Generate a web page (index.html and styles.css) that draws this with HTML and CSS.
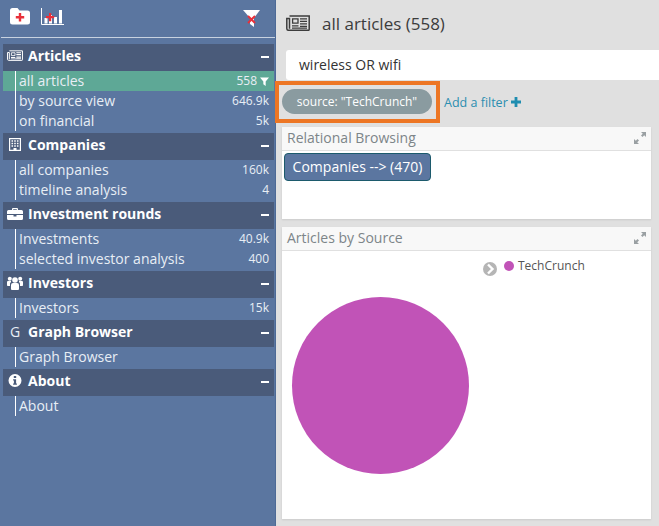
FILE: index.html
```html
<!DOCTYPE html>
<html lang="en">
<head>
  <meta charset="UTF-8">
  <title>all articles (558)</title>
  <link rel="stylesheet" href="styles.css">
</head>
<body>
  <svg class="defs" width="0" height="0">
    <symbol id="news" viewBox="0 0 24 16">
      <path fill="none" stroke="currentColor" stroke-width="1.500" d="M3.500 1h19.700v13.400a.9.9 0 0 1-.9.9H2.400A1.700 1.700 0 0 1 .8 13.600V3.500h2.700v10.200"/>
      <path fill="none" stroke="currentColor" stroke-width="1.300" d="M6.600 3.900h5.400v4.300H6.600z"/>
      <path fill="currentColor" d="M14 3.300h7v1.300h-7zM14 5.800h7v1.300h-7zM14 8.300h7v1.300h-7zM6 10.300h6.500v1.300H6zM14 10.800h7v1.300h-7zM6 12.600h15v1.200H6z"/>
    </symbol>
  </svg>
  <aside class="sidebar">
    <div class="toolbar">
      <svg width="20" height="17" viewBox="0 0 20 17">
        <path fill="#fff" d="M2.500 0h5l2 2.500h8a2.500 2.500 0 0 1 2.500 2.500v9a2.500 2.500 0 0 1-2.500 2.500h-15A2.500 2.500 0 0 1 0 14V2.500A2.500 2.500 0 0 1 2.500 0z"/>
        <path fill="#e8303a" d="M8.800 5h2.400v3h3v2.400h-3v3H8.800v-3h-3V8h3z"/>
      </svg>
      <svg width="24" height="19" viewBox="0 0 24 19">
        <path fill="none" stroke="#fff" stroke-width="1" d="M.5 0v16.500h22.500"/>
        <path fill="#fff" d="M3.500 10h3v5.500h-3zM8 7h3v8.500H8zM13 9h3v6.500h-3zM18 2h3v13.500h-3z"/>
        <path fill="#e8303a" d="M8 5h2.200v3h3v2.200h-3v3H8v-3H5V8h3z"/>
      </svg>
      <svg class="funnel" width="18" height="19" viewBox="0 0 18 19">
        <path fill="#fff" d="M0 1h17L11 9v9L7 15V9z"/>
        <path stroke="#e8303a" stroke-width="2" d="M5 7l7 7M12 7l-7 7"/>
      </svg>
    </div>

    <section class="group">
      <h3 class="group-head">
        <svg class="group-icon" width="16" height="11"><use href="#news"/></svg>
        <span class="group-name">Articles</span><span class="collapse"></span>
      </h3>
      <ul class="items">
        <li class="active"><span>all articles</span><span class="count">558
          <svg width="9" height="9" viewBox="0 0 10 10"><path fill="#fff" d="M0 .5h10L6.300 5v5L3.700 8V5z"/></svg></span></li>
        <li><span>by source view</span><span class="count">646.9k</span></li>
        <li><span>on financial</span><span class="count">5k</span></li>
      </ul>
    </section>

    <section class="group">
      <h3 class="group-head">
        <svg class="group-icon" width="16" height="13" viewBox="0 0 16 13">
          <path fill="none" stroke="#fff" stroke-width="1.200" d="M2.600.6h10.800v11.800H2.600z"/>
          <path fill="#fff" d="M4.500 2.200h1.600v1.600H4.500zM7.200 2.200h1.600v1.600H7.200zM9.900 2.200h1.600v1.600H9.900zM4.500 4.700h1.600v1.600H4.500zM7.200 4.700h1.600v1.600H7.200zM9.900 4.700h1.600v1.600H9.900zM4.500 7.200h1.600v1.600H4.500zM7.200 7.200h1.600v1.600H7.200zM9.900 7.200h1.600v1.600H9.900zM6.500 10h3v2.500h-3z"/>
        </svg>
        <span class="group-name">Companies</span><span class="collapse"></span>
      </h3>
      <ul class="items">
        <li><span>all companies</span><span class="count">160k</span></li>
        <li><span>timeline analysis</span><span class="count">4</span></li>
      </ul>
    </section>

    <section class="group">
      <h3 class="group-head">
        <svg class="group-icon" width="16" height="12" viewBox="0 0 16 12">
          <path fill="#fff" d="M5 2V1a1 1 0 0 1 1-1h4a1 1 0 0 1 1 1v1h3.500A1.500 1.500 0 0 1 16 3.500V6H0V3.500A1.500 1.500 0 0 1 1.500 2zM6.200 1.200V2h3.600v-.8zM0 7h6.500v1.500h3V7H16v3.500a1.500 1.500 0 0 1-1.500 1.500h-13A1.500 1.500 0 0 1 0 10.500z"/>
        </svg>
        <span class="group-name">Investment rounds</span><span class="collapse"></span>
      </h3>
      <ul class="items">
        <li><span>Investments</span><span class="count">40.9k</span></li>
        <li><span>selected investor analysis</span><span class="count">400</span></li>
      </ul>
    </section>

    <section class="group">
      <h3 class="group-head">
        <svg class="group-icon" width="16" height="14" viewBox="0 0 16 14">
          <circle fill="#fff" cx="8" cy="4" r="2.800"/><circle fill="#fff" cx="2.800" cy="2.800" r="2"/><circle fill="#fff" cx="13.200" cy="2.800" r="2"/>
          <path fill="#fff" d="M4 9a2 2 0 0 1 2-2h4a2 2 0 0 1 2 2v4a1 1 0 0 1-1 1H5a1 1 0 0 1-1-1zM0 6a1 1 0 0 1 1-1h3v1A3 3 0 0 0 3 9v1H.8A.8.8 0 0 1 0 9.200zM16 6a1 1 0 0 0-1-1h-3v1a3 3 0 0 1 1 3v1h2.200a.8.8 0 0 0 .8-.8z"/>
        </svg>
        <span class="group-name">Investors</span><span class="collapse"></span>
      </h3>
      <ul class="items">
        <li><span>Investors</span><span class="count">15k</span></li>
      </ul>
    </section>

    <section class="group">
      <h3 class="group-head">
        <span class="group-icon letter">G</span>
        <span class="group-name">Graph Browser</span><span class="collapse"></span>
      </h3>
      <ul class="items">
        <li><span>Graph Browser</span></li>
      </ul>
    </section>

    <section class="group">
      <h3 class="group-head">
        <svg class="group-icon" width="16" height="13" viewBox="0 0 13 13">
          <path fill="#fff" fill-rule="evenodd" d="M6.500 0a6.500 6.500 0 1 1 0 13 6.500 6.500 0 0 1 0-13zM5.300 2v2h2.400V2zM4.600 5.300v1.200h.8V9.500h-.8v1.200h3.800V9.500h-.8V5.300z"/>
        </svg>
        <span class="group-name">About</span><span class="collapse"></span>
      </h3>
      <ul class="items">
        <li><span>About</span></li>
      </ul>
    </section>
  </aside>

  <main class="content">
    <div class="title">
      <svg class="title-icon" width="24" height="16"><use href="#news"/></svg>
      <span>all articles (558)</span>
    </div>
    <div class="search">wireless OR wifi</div>
    <div class="filters">
      <div class="highlight"><span class="pill">source: "TechCrunch"</span></div>
      <a class="add-filter">Add a filter <svg width="10" height="10" viewBox="0 0 10 10"><path fill="#1f8db0" d="M3.600 0h2.800v3.600H10v2.800H6.400V10H3.600V6.400H0V3.600h3.600z"/></svg></a>
    </div>

    <section class="panel panel-relational">
      <header class="panel-head">
        <span>Relational Browsing</span>
        <svg class="expand" width="12" height="12" viewBox="0 0 12 12"><path fill="#9aa0a3" d="M7 0h5v5l-1.800-1.800L8.500 5 7 3.500l1.800-1.700zM0 12V7l1.800 1.800L3.500 7 5 8.500 3.200 10.200 5 12z"/></svg>
      </header>
      <div class="panel-body"><a class="rel-btn">Companies --&gt; (470)</a></div>
    </section>

    <section class="panel panel-chart">
      <header class="panel-head">
        <span>Articles by Source</span>
        <svg class="expand" width="12" height="12" viewBox="0 0 12 12"><path fill="#9aa0a3" d="M7 0h5v5l-1.800-1.800L8.500 5 7 3.500l1.800-1.700zM0 12V7l1.800 1.800L3.500 7 5 8.500 3.200 10.200 5 12z"/></svg>
      </header>
      <svg class="chart" width="369" height="268" viewBox="0 0 369 268">
        <circle cx="98.500" cy="134.500" r="88.500" fill="#c153b7"/>
        <circle cx="208" cy="18" r="7" fill="#b5b5b5"/>
        <path d="M206 13.500l4.500 4.500-4.500 4.500" fill="none" stroke="#fff" stroke-width="2.400"/>
        <circle cx="227" cy="15" r="5" fill="#c153b7"/>
        <text x="236" y="19" class="legend">TechCrunch</text>
      </svg>
    </section>
  </main>
</body>
</html>
```

FILE: styles.css
```css
* { margin:0; padding:0; box-sizing:border-box }
html, body { height:100%; }
body {
  display:flex; overflow:hidden;
  background:#e0e0e0; color:#333;
  font-family:'Open Sans',sans-serif; font-size:14px;
}
.defs { display:none; }

.sidebar {
  width:276px; flex-shrink:0; height:100%;
  background:#5b76a0; color:#e8eef5;
  border-right:1px solid #4d6a96;
  padding-left:1px;
}
.toolbar {
  height:38px; display:flex; align-items:flex-start;
  padding:8px 14px 0 9px; gap:11px;
  border-bottom:1px solid #c8d2e0;
  margin-bottom:6px;
}
.funnel { margin-left:auto; margin-top:1px; }

.group { margin:0 1px 2px 2px; }
.group-head {
  height:27px; display:flex; align-items:center;
  background:#4a5b7a; color:#fff;
  font-size:14px; font-weight:700;
  padding:0 4px 4px 4px;
}
.group-icon { width:16px; margin-right:5px; flex-shrink:0; color:#fff; }
.letter { font-weight:400; text-align:center; color:#e8eef5; }
.group-name { flex:1; }
.collapse { width:8px; height:2px; background:#fff; margin:2px 1px 0 0; }

.items { list-style:none; }
.items li {
  height:20px; line-height:20px;
  display:flex; justify-content:space-between;
  padding:0 5px 0 16px;
  background-image:linear-gradient(#fff,#fff);
  background-size:1px 100%;
  background-position:12px 0;
  background-repeat:no-repeat;
}
.items li.active { background-color:#5ea896; }
.count { font-size:12px; display:flex; align-items:center; gap:3px; }

.content { flex:1; min-width:0; padding-left:10px; }
.title {
  height:50px; display:flex; align-items:center; gap:12px;
  font-size:17px; color:#3c3c3c;
  padding-bottom:4px;
}
.title-icon { color:#3c3c3c; }
.search {
  height:30px; line-height:29px;
  background:#fff; color:#333;
  padding-left:13px;
  border-radius:3px 0 0 3px;
}
.filters {
  display:flex; align-items:center; gap:4px;
  margin-left:-11px; margin-top:1px; margin-bottom:4px;
}
.highlight {
  width:165px; height:42px;
  border:4px solid #ed7624;
  padding:4px 0 0 3px;
}
.pill {
  display:block; width:150px; height:25px; line-height:25px;
  background:#8a9ba0; color:#fff;
  border-radius:13px; text-align:center;
  font-size:12px;
}
.add-filter { color:#2b8eb0; font-size:12.500px; }

.panel { background:#fff; margin-right:8px; margin-left:-4px; box-shadow:0 1px 2px rgba(0,0,0,.1); }
.panel-relational { height:92px; margin-bottom:8px; }
.panel-chart { height:292px; }
.panel-head {
  height:24px; display:flex; align-items:center; justify-content:space-between;
  padding:0 5px 2px 5px;
  background:#f8f8f8; color:#7d8589;
  border-bottom:1px solid #e0e0e0;
}
.panel-body { padding:2px; }
.rel-btn {
  display:inline-block; width:147px; height:28px; line-height:26px;
  background:#5b76a0; color:#fff;
  border:1px solid #1c5a6c; border-radius:4px;
  text-align:center;
}
.chart { display:block; }
.legend { font-size:12px; fill:#555; font-family:'Open Sans',sans-serif; }
```
